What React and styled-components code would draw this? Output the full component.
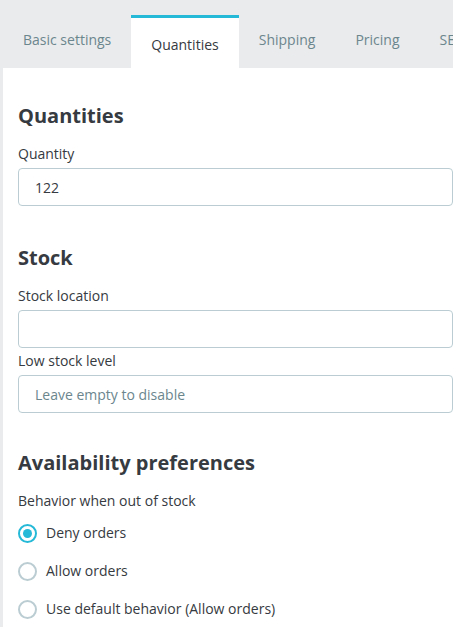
import React from 'react';
import styled, { createGlobalStyle } from 'styled-components';

const GlobalStyle = createGlobalStyle`
  html, body {
    margin: 0;
    padding: 0;
    background: #eaebec;
    font-family: 'Open Sans', 'Noto Sans', Arial, sans-serif;
    color: #363a41;
  }
`

const Page = styled.div`
  width: 453px;
  height: 627px;
  overflow: hidden;
  padding-left: 3px;
  padding-top: 15px;
  box-sizing: border-box;
`

const Tabs = styled.div`
  display: flex;
  align-items: flex-end;
  white-space: nowrap;
  height: 53px;
`

const Tab = styled.div`
  padding: 0 20px;
  height: ${p => (p.$active ? '50px' : '53px')};
  line-height: ${p => (p.$active ? '53px' : '50px')};
  font-size: 14px;
  color: ${p => (p.$active ? '#363a41' : '#6c868e')};
  background: ${p => (p.$active ? '#fff' : 'transparent')};
  border-top: ${p => (p.$active ? '3px solid #25b9d7' : 'none')};
  flex-shrink: 0;
`

const Panel = styled.div`
  background: #fff;
  padding: 34px 0 0 15px;
  height: 560px;
`

const Section = styled.div`
  margin-bottom: ${p => p.$mb || '37px'};
`

const Heading = styled.h2`
  margin: 0 0 14px;
  font-size: 20px;
  font-weight: 700;
  line-height: 28px;
  color: #363a41;
`

const Label = styled.div`
  font-size: 14px;
  line-height: 20px;
  margin-bottom: 4px;
`

const Input = styled.input`
  display: block;
  box-sizing: border-box;
  width: 435px;
  height: 38px;
  border: 1px solid #bbcdd2;
  border-radius: 4px;
  padding: 0 16px;
  font-family: inherit;
  font-size: 14px;
  color: #363a41;
  margin-bottom: ${p => p.$mb || '0px'};
  &::placeholder {
    color: #6c868e;
  }
`

const RadioList = styled.div`
  display: flex;
  flex-direction: column;
  gap: 18px;
  margin-top: 12px;
`

const RadioRow = styled.label`
  display: flex;
  align-items: center;
  gap: 9px;
  font-size: 14px;
  line-height: 20px;
`

const Circle = styled.span`
  width: 19px;
  height: 19px;
  box-sizing: border-box;
  border-radius: 50%;
  border: 2px solid ${p => (p.$checked ? '#25b9d7' : '#bbcdd2')};
  display: flex;
  align-items: center;
  justify-content: center;
  &::after {
    content: '';
    width: 9px;
    height: 9px;
    border-radius: 50%;
    background: ${p => (p.$checked ? '#25b9d7' : 'transparent')};
  }
`

const tabs = ['Basic settings', 'Quantities', 'Shipping', 'Pricing', 'SEO']

const options = [
  { label: 'Deny orders', checked: true },
  { label: 'Allow orders', checked: false },
  { label: 'Use default behavior (Allow orders)', checked: false },
]

export default function App() {
  return (
    <Page>
      <GlobalStyle />
      <Tabs>
        {tabs.map(t => (
          <Tab key={t} $active={t === 'Quantities'}>{t}</Tab>
        ))}
      </Tabs>
      <Panel>
        <Section $mb="38px">
          <Heading>Quantities</Heading>
          <Label>Quantity</Label>
          <Input defaultValue="122" />
        </Section>
        <Section $mb="36px">
          <Heading>Stock</Heading>
          <Label>Stock location</Label>
          <Input $mb="3px" />
          <Label>Low stock level</Label>
          <Input placeholder="Leave empty to disable" />
        </Section>
        <Section>
          <Heading>Availability preferences</Heading>
          <Label>Behavior when out of stock</Label>
          <RadioList>
            {options.map(o => (
              <RadioRow key={o.label}>
                <Circle $checked={o.checked} />
                {o.label}
              </RadioRow>
            ))}
          </RadioList>
        </Section>
      </Panel>
    </Page>
  )
}
